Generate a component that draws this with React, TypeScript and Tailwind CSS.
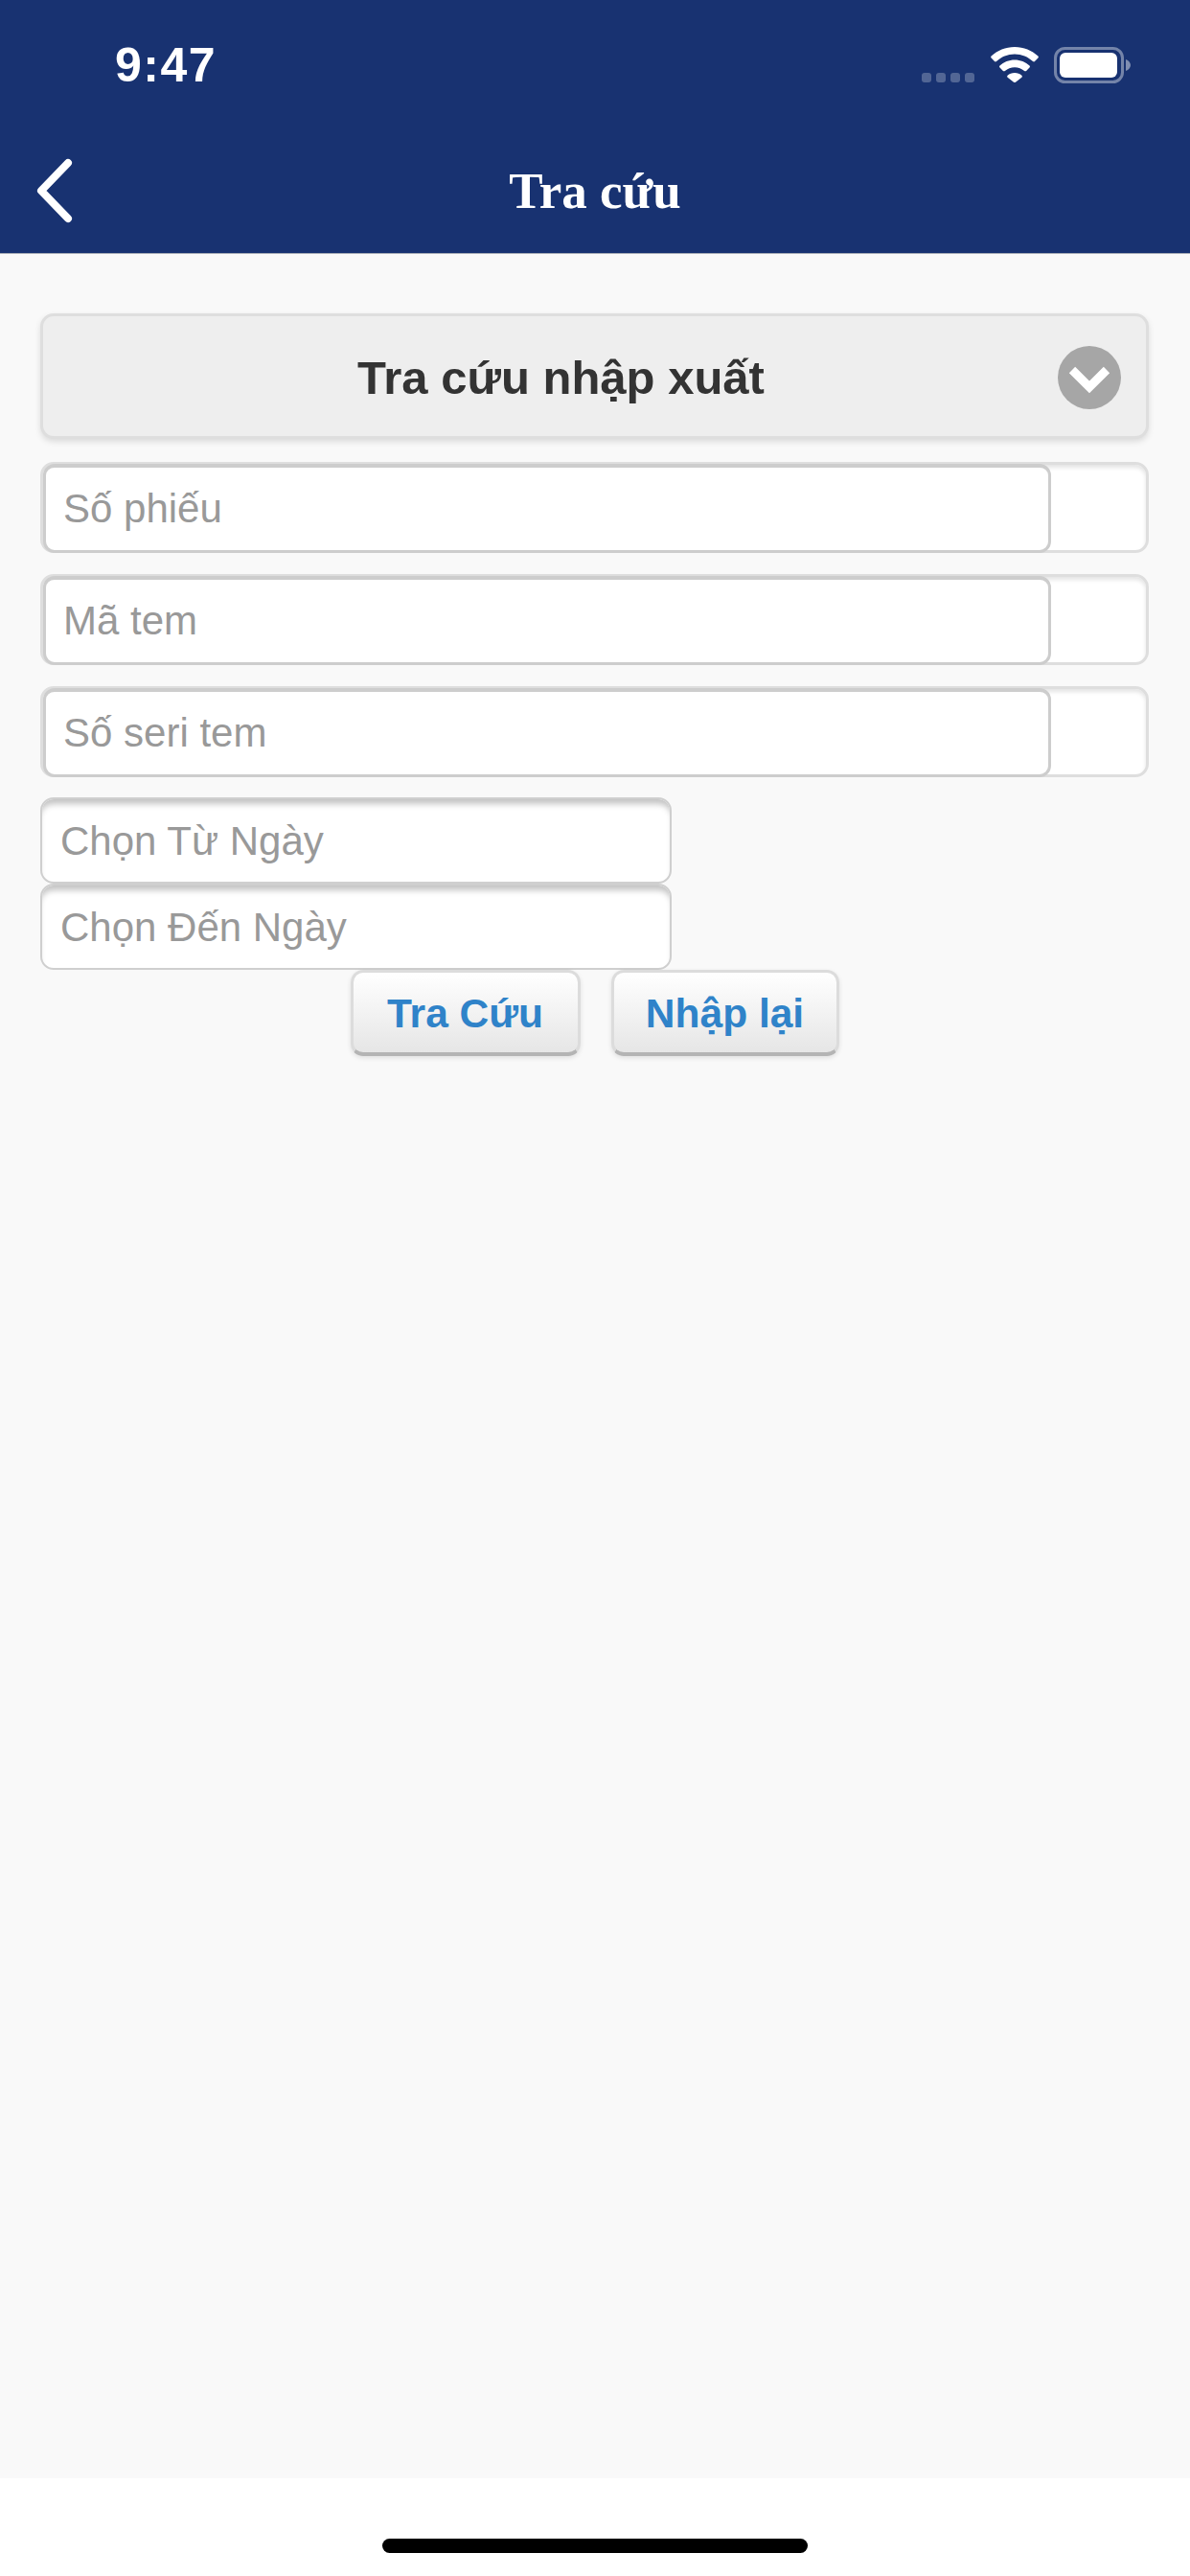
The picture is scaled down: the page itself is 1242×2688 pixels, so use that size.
const sans = "font-['Liberation_Sans',Arial,sans-serif]";

function SearchRow({ placeholder }: { placeholder: string }) {
  return (
    <div className="h-[95px] rounded-[14px] border-[3px] border-[#dedede] bg-white shadow-[inset_0_3px_4px_#e4e4e4]">
      <input
        type="text"
        placeholder={placeholder}
        className="-mt-px block h-[93px] w-[1052px] rounded-[12px] border-[3px] border-t-[4px] border-[#cdcdcd] bg-white pl-[18px] text-[42px] text-[#333] outline-none placeholder:text-[#999]"
      />
    </div>
  );
}

function DateField({ placeholder }: { placeholder: string }) {
  return (
    <input
      type="text"
      placeholder={placeholder}
      className="block h-[90px] w-[659px] rounded-[14px] border-[2px] border-[#cfcfcf] bg-white pt-[2px] pl-[19px] text-[42px] text-[#333] shadow-[inset_0_8px_6px_-3px_#c4c4c4] outline-none placeholder:text-[#999]"
    />
  );
}

function ActionButton({ label, width }: { label: string; width: string }) {
  return (
    <button className={`h-[90px] ${width} rounded-[13px] border-[3px] border-b-[4px] border-[#dcdcdc] border-b-[#b4b4b4] bg-gradient-to-b from-white to-[#e6e6e6] pt-[2px] text-[42.5px] font-bold text-[#2f83c9] shadow-[0_2px_5px_rgba(0,0,0,0.1)]`}>
      {label}
    </button>
  );
}

export default function App() {
  return (
    <div className={`flex h-[2688px] w-[1242px] flex-col bg-white ${sans}`}>
      <header className="h-[265px] border-b border-[#a9aeb8] bg-[#183271] text-white">
        <div className="flex h-[132px] items-start justify-between pt-[44px] pr-[62px] pl-[120px]">
          <span className="text-[50px] leading-[48px] font-bold tracking-[1.5px]">9:47</span>
          <div className="mt-[5px] flex items-start">
            <svg width="56" height="12" viewBox="0 0 56 12" className="mt-[26px] mr-[16px] fill-white opacity-25">
              <rect x="0" y="1" width="10" height="10" rx="3" />
              <rect x="15" y="1" width="10" height="10" rx="3" />
              <rect x="30" y="1" width="10" height="10" rx="3" />
              <rect x="45" y="1" width="10" height="10" rx="3" />
            </svg>
            <svg width="50" height="37" viewBox="0 0 50 37" className="mr-[16px] fill-white">
              <path d="M25 0C15.500 0 7 3.700.6 9.600c-.6.6-.6 1.400 0 2l3.400 3.500c.5.500 1.400.500 2 0C11 10.300 17.600 7.500 25 7.500s14 2.800 19 7.600c.6.500 1.500.500 2 0l3.400-3.500c.6-.6.6-1.400 0-2C43 3.700 34.500 0 25 0z" />
              <path d="M25 13.400c-6 0-11.400 2.300-15.500 6-.6.600-.6 1.400 0 2l3.400 3.500c.5.500 1.400.500 2 0 2.700-2.300 6.200-3.700 10.100-3.700s7.400 1.400 10.100 3.700c.6.500 1.500.500 2 0l3.400-3.500c.6-.6.6-1.400 0-2-4.100-3.700-9.500-6-15.500-6z" />
              <path d="M25 27c-2.900 0-5.500 1-7.400 2.700-.6.500-.6 1.400 0 2l6.400 5c.5.400 1.500.400 2 0l6.400-5c.6-.6.600-1.500 0-2C30.500 28 27.900 27 25 27z" />
            </svg>
            <svg width="80" height="38" viewBox="0 0 80 38">
              <rect x="1.500" y="1.500" width="70" height="35" rx="10" fill="none" stroke="#fff" strokeOpacity="0.4" strokeWidth="3" />
              <rect x="6" y="6" width="60" height="26" rx="6" fill="#fff" />
              <path d="M75 13c3 1 5 3.500 5 6s-2 5-5 6z" fill="#fff" fillOpacity="0.45" />
            </svg>
          </div>
        </div>
        <div className="grid h-[132px] grid-cols-[1fr_auto_1fr] items-start">
          <svg width="44" height="70" viewBox="0 0 44 70" className="mt-[32px] ml-[35px]" fill="none" stroke="#fff" strokeWidth="8" strokeLinecap="round" strokeLinejoin="round">
            <path d="M36 6L8 35l28 29" />
          </svg>
          <h1 className="mt-[37px] font-['Liberation_Serif',serif] text-[53px] leading-[60px] font-bold">Tra cứu</h1>
        </div>
      </header>

      <main className="h-[2321px] bg-[#f9f9f9] px-[42px] pt-[62px]">
        <div className="relative flex h-[131px] w-[1157px] items-center justify-center rounded-[14px] border-[3px] border-[#dedede] bg-[#eeeeee] pt-[5px] pr-[70px] shadow-[0_3px_6px_rgba(0,0,0,0.12)]">
          <span className="text-[49px] font-bold text-[#333]">Tra cứu nhập xuất</span>
          <svg width="66" height="66" viewBox="0 0 66 66" className="absolute top-[31px] right-[26px]">
            <circle cx="33" cy="33" r="33" fill="#a6a6a6" />
            <path d="M15 25l18 18 18-18" fill="none" stroke="#fff" strokeWidth="9" />
          </svg>
        </div>

        <div className="mt-[24px] flex w-[1157px] flex-col gap-[22px]">
          <SearchRow placeholder="Số phiếu" />
          <SearchRow placeholder="Mã tem" />
          <SearchRow placeholder="Số seri tem" />
        </div>

        <div className="mt-[21px] flex flex-col">
          <DateField placeholder="Chọn Từ Ngày" />
          <DateField placeholder="Chọn Đến Ngày" />
        </div>

        <div className="flex w-[1157px] justify-center gap-[32px]">
          <ActionButton label="Tra Cứu" width="w-[240px]" />
          <ActionButton label="Nhập lại" width="w-[238px]" />
        </div>
      </main>

      <div className="flex flex-1 justify-center pt-[63px]">
        <div className="h-[15px] w-[444px] rounded-full bg-black" />
      </div>
    </div>
  );
}
